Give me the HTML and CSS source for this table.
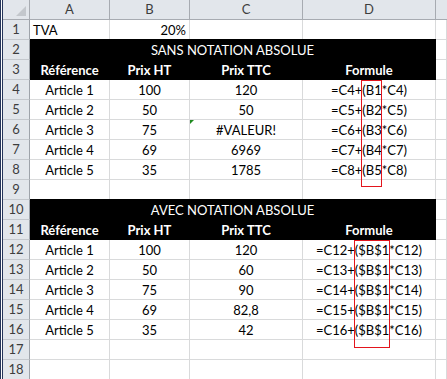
FILE: index.html
```html
<!DOCTYPE html>
<html lang="fr">
<head>
<meta charset="utf-8">
<title>Notation absolue</title>
<link rel="stylesheet" href="styles.css">
</head>
<body>
<div class="sheet">
  <div class="grid">
    <div class="corner"></div>
    <div class="colhead">A</div>
    <div class="colhead">B</div>
    <div class="colhead">C</div>
    <div class="colhead">D</div>
    <div class="colhead last"></div>

    <div class="rowhead">1</div>
    <div class="cell left">TVA</div>
    <div class="cell right">20%</div>
    <div class="cell"></div>
    <div class="cell"></div>
    <div class="cell"></div>

    <div class="rowhead">2</div>
    <div class="cell band title">SANS NOTATION ABSOLUE</div>
    <div class="cell"></div>

    <div class="rowhead">3</div>
    <div class="cell band bold">Référence</div>
    <div class="cell band bold">Prix HT</div>
    <div class="cell band bold">Prix TTC</div>
    <div class="cell band bold">Formule</div>
    <div class="cell"></div>

    <div class="rowhead">4</div>
    <div class="cell">Article 1</div>
    <div class="cell">100</div>
    <div class="cell">120</div>
    <div class="cell">=C4+(B1*C4)</div>
    <div class="cell"></div>

    <div class="rowhead">5</div>
    <div class="cell">Article 2</div>
    <div class="cell">50</div>
    <div class="cell">50</div>
    <div class="cell">=C5+(B2*C5)</div>
    <div class="cell"></div>

    <div class="rowhead">6</div>
    <div class="cell">Article 3</div>
    <div class="cell">75</div>
    <div class="cell flag">#VALEUR!</div>
    <div class="cell">=C6+(B3*C6)</div>
    <div class="cell"></div>

    <div class="rowhead">7</div>
    <div class="cell">Article 4</div>
    <div class="cell">69</div>
    <div class="cell">6969</div>
    <div class="cell">=C7+(B4*C7)</div>
    <div class="cell"></div>

    <div class="rowhead">8</div>
    <div class="cell">Article 5</div>
    <div class="cell">35</div>
    <div class="cell">1785</div>
    <div class="cell">=C8+(B5*C8)</div>
    <div class="cell"></div>

    <div class="rowhead">9</div>
    <div class="cell"></div>
    <div class="cell"></div>
    <div class="cell"></div>
    <div class="cell"></div>
    <div class="cell"></div>

    <div class="rowhead">10</div>
    <div class="cell band title">AVEC NOTATION ABSOLUE</div>
    <div class="cell"></div>

    <div class="rowhead">11</div>
    <div class="cell band bold">Référence</div>
    <div class="cell band bold">Prix HT</div>
    <div class="cell band bold">Prix TTC</div>
    <div class="cell band bold">Formule</div>
    <div class="cell"></div>

    <div class="rowhead">12</div>
    <div class="cell">Article 1</div>
    <div class="cell">100</div>
    <div class="cell">120</div>
    <div class="cell">=C12+($B$1*C12)</div>
    <div class="cell"></div>

    <div class="rowhead">13</div>
    <div class="cell">Article 2</div>
    <div class="cell">50</div>
    <div class="cell">60</div>
    <div class="cell">=C13+($B$1*C13)</div>
    <div class="cell"></div>

    <div class="rowhead">14</div>
    <div class="cell">Article 3</div>
    <div class="cell">75</div>
    <div class="cell">90</div>
    <div class="cell">=C14+($B$1*C14)</div>
    <div class="cell"></div>

    <div class="rowhead">15</div>
    <div class="cell">Article 4</div>
    <div class="cell">69</div>
    <div class="cell">82,8</div>
    <div class="cell">=C15+($B$1*C15)</div>
    <div class="cell"></div>

    <div class="rowhead">16</div>
    <div class="cell">Article 5</div>
    <div class="cell">35</div>
    <div class="cell">42</div>
    <div class="cell">=C16+($B$1*C16)</div>
    <div class="cell"></div>

    <div class="rowhead">17</div>
    <div class="cell"></div>
    <div class="cell"></div>
    <div class="cell"></div>
    <div class="cell"></div>
    <div class="cell"></div>

    <div class="rowhead">18</div>
    <div class="cell"></div>
    <div class="cell"></div>
    <div class="cell"></div>
    <div class="cell"></div>
    <div class="cell"></div>
  </div>

  <!-- highlight frames drawn over the referenced cells in the formulas -->
  <div class="mark mark-relative"></div>
  <div class="mark mark-absolute"></div>
</div>
</body>
</html>
```
FILE: styles.css
```css
* {
  box-sizing: border-box;
}

html, body {
  margin: 0;
  padding: 0;
  background: #ffffff;
}

body {
  font-family: "Lato", "Open Sans", sans-serif;
  font-size: 13px;
  color: #000000;
  overflow: hidden;
}

.sheet {
  position: relative;
  width: 447px;
  height: 379px;
  border-left: 3px double #25355a;
  overflow: hidden;
}

.grid {
  display: grid;
  grid-template-columns: 27px 80px 80px 113px 133px 1fr;
  grid-auto-rows: 20px;
}

/* column and row headers */
.corner,
.colhead,
.rowhead {
  background: #e2e6eb;
  color: #3d3d3d;
  display: flex;
  align-items: center;
  justify-content: center;
  border-right: 1px solid #a7abb1;
  border-bottom: 1px solid #a7abb1;
  line-height: 1;
}

.colhead.last {
  border-right: none;
}

.rowhead {
  border-right: 1px solid #9ea3aa;
  border-bottom: 1px solid #c4c8cd;
}

.corner {
  position: relative;
}

.corner::after {
  content: "";
  position: absolute;
  right: 3px;
  bottom: 3px;
  border-left: 10px solid transparent;
  border-bottom: 10px solid #c3c7cc;
}

/* body cells */
.cell {
  position: relative;
  display: flex;
  align-items: center;
  justify-content: center;
  padding: 1px 3px 0;
  border-right: 1px solid #d9dadb;
  border-bottom: 1px solid #d9dadb;
  white-space: nowrap;
  line-height: 1;
}

.cell.left {
  justify-content: flex-start;
}

.cell.right {
  justify-content: flex-end;
}

.cell.band {
  background: #000000;
  color: #ffffff;
  border-color: #000000;
  box-shadow: 0 -1px 0 #000000;
}

.cell.title {
  grid-column: span 4;
}

.cell.bold {
  font-weight: 700;
}

/* error indicator in the top-left corner of a cell */
.cell.flag::before {
  content: "";
  position: absolute;
  left: 0;
  top: 0;
  border-top: 4px solid #1f8a1f;
  border-right: 4px solid transparent;
}

.mark {
  position: absolute;
  border: 1px solid #e3151d;
}

.mark-relative {
  left: 358px;
  top: 80px;
  width: 21px;
  height: 107px;
}

.mark-absolute {
  left: 351px;
  top: 240px;
  width: 36px;
  height: 108px;
}
```
